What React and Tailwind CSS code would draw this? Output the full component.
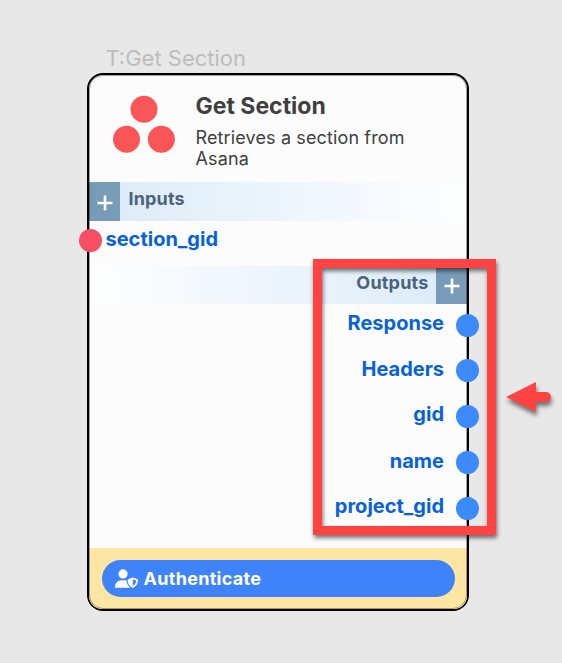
import { FaUserShield } from "react-icons/fa6";

const outputs = [
  { name: "Response", row: "h-[45px] pt-[6px]" },
  { name: "Headers", row: "h-[46px] pt-[7px]" },
  { name: "gid", row: "h-[46px] pt-[6px]" },
  { name: "name", row: "h-[46px] pt-[7px]" },
  { name: "project_gid", row: "h-[46px] pt-[6px]" },
];

function Plus({ className }) {
  return (
    <div className={`flex h-full shrink-0 items-center justify-center bg-[#789cb8] ${className}`}>
      <svg width="16" height="16" viewBox="0 0 16 16" fill="none" stroke="white" strokeWidth="2.6">
        <path d="M8 0.5V15.5M0.5 8H15.5" />
      </svg>
    </div>
  );
}

function AsanaLogo() {
  return (
    <svg className="mt-[20px] h-[58px] w-[62px] shrink-0" viewBox="0 0 62 58" fill="#fb5555">
      <circle cx="31" cy="14.2" r="13.5" />
      <circle cx="13.5" cy="44.3" r="13.5" />
      <circle cx="48.4" cy="44.3" r="13.5" />
    </svg>
  );
}

export default function App() {
  return (
    <div className="relative h-[663px] w-[562px] overflow-hidden bg-[#e8e8e8] pt-[44px] pl-[87px] font-['Inter',sans-serif]">
      <div className="h-[29px] pl-[18.5px] text-[22px] leading-[29px] whitespace-nowrap text-[#bdbdbd]">T:Get Section</div>

      <div className="relative flex h-[538px] w-[382px] flex-col rounded-[16px] border-2 border-black bg-[#fcfcfc]">
        <div className="pointer-events-none absolute inset-0 rounded-[14px] border border-black/35" />
        <div className="flex h-[107px] shrink-0 pl-[24px]">
          <AsanaLogo />
          <div className="ml-[20.5px] pt-[17px]">
            <div className="text-[23px] leading-[28px] font-bold whitespace-nowrap text-[#404040]">Get Section</div>
            <div className="mt-[7px] text-[18px] leading-[21px] tracking-[0.13px] whitespace-nowrap text-[#404040]">
              Retrieves a section from
              <br />
              Asana
            </div>
          </div>
        </div>

        <div className="flex h-[39px] shrink-0 bg-linear-to-r from-[#d9eaf7] via-[#edf5fc] to-[#fefefe]">
          <Plus className="w-[31px] pt-[3px] pl-px" />
          <span className="ml-[8.5px] pt-[5px] text-[18px] leading-[24px] font-bold tracking-[0.15px] text-[#4b637b]">Inputs</span>
        </div>

        <div className="relative flex h-[45px] shrink-0 pt-[5px] pl-[16.5px] text-[20px] leading-[26px] font-bold text-[#0762d9]">
          <span className="absolute top-[8px] -left-[10px] z-10 h-[23px] w-[23px] rounded-full bg-[#f64f64]" />
          section_gid
        </div>

        <div className="flex h-[38px] shrink-0 justify-end bg-linear-to-r from-[#fefefe] via-[#edf5fc] to-[#d9eaf7]">
          <span className="mr-[7.5px] pt-[5px] text-[18px] leading-[24px] font-bold tracking-[0.2px] text-[#4b637b]">Outputs</span>
          <Plus className="w-[31px] pt-[2px]" />
        </div>

        <div className="flex h-[244px] shrink-0 flex-col">
          {outputs.map((output) => (
            <div key={output.name} className={`relative flex shrink-0 justify-end pr-[23px] text-[20px] leading-[26px] font-bold text-[#0762d9] ${output.row}`}>
              {output.name}
              <span className="absolute top-[9.5px] right-[-12.25px] z-10 h-[23.5px] w-[23.5px] rounded-full bg-[#3d8afc]" />
            </div>
          ))}
        </div>

        <div className="flex h-[61px] shrink-0 rounded-b-[13px] bg-[#ffe6a5] px-[12.5px] pt-[12px]">
          <div className="flex h-[37px] grow items-center rounded-full bg-[#3f83fb] pl-[13px] text-white">
            <FaUserShield className="h-[19px] w-[23px]" />
            <span className="ml-[6px] text-[18px] leading-[24px] font-bold tracking-[0.3px]">Authenticate</span>
          </div>
        </div>
      </div>

      <div className="absolute top-[259px] left-[313px] z-20 h-[276px] w-[183px] border-[9px] border-[#ff4242] drop-shadow-[1px_3px_2px_rgba(0,0,0,0.55)]" />
      <svg className="absolute top-[375px] left-[500px] drop-shadow-[1px_4px_2px_rgba(0,0,0,0.5)]" width="56" height="44" viewBox="0 0 56 44" fill="#ff4242">
        <path d="M6 22L36 7V17H46A5 5 0 0 1 46 27H36V37Z" />
      </svg>
    </div>
  );
}
